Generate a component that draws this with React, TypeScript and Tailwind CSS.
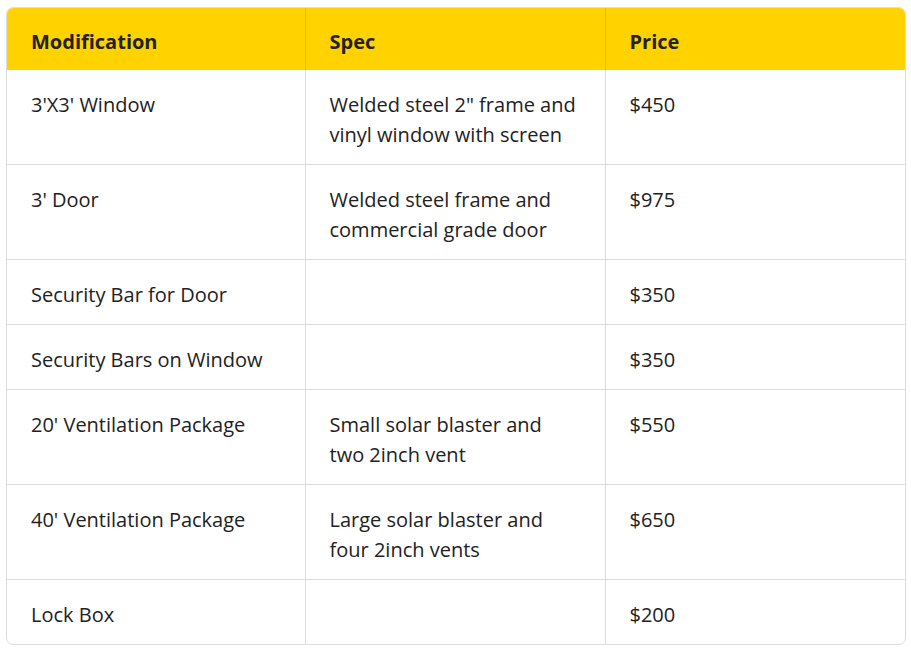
const rows = [
  { mod: "3'X3' Window", spec: "Welded steel 2\" frame and vinyl window with screen", price: "$450" },
  { mod: "3' Door", spec: "Welded steel frame and commercial grade door", price: "$975" },
  { mod: "Security Bar for Door", spec: "", price: "$350" },
  { mod: "Security Bars on Window", spec: "", price: "$350" },
  { mod: "20' Ventilation Package", spec: "Small solar blaster and two 2inch vent", price: "$550" },
  { mod: "40' Ventilation Package", spec: "Large solar blaster and four 2inch vents", price: "$650" },
  { mod: "Lock Box", spec: "", price: "$200" },
];

export default function App() {
  return (
    <div className="bg-white min-h-screen pt-[7px] pl-[6px] font-['Open_Sans',sans-serif] text-[#222]">
      <div className="w-[900px] rounded-[7px] border border-[#dddddd] overflow-hidden">
        <table className="w-full table-fixed border-collapse text-[20px] leading-[30px]">
          <thead>
            <tr className="bg-[#ffd200]">
              <th className="w-[298px] text-left font-bold pl-6 pt-[19px] pb-[13px] border-r border-[#e6bd00]">Modification</th>
              <th className="w-[300px] text-left font-bold pl-6 pt-[19px] pb-[13px] border-r border-[#e6bd00]">Spec</th>
              <th className="text-left font-bold pl-6 pt-[19px] pb-[13px]">Price</th>
            </tr>
          </thead>
          <tbody>
            {rows.map((r, i) => (
              <tr key={i} className={i > 0 ? "border-t border-[#dddddd]" : ""}>
                <td className="align-top pl-6 pr-6 pt-[20px] pb-[14px] border-r border-[#dddddd]">{r.mod}</td>
                <td className="align-top pl-6 pr-6 pt-[20px] pb-[14px] border-r border-[#dddddd]">{r.spec}</td>
                <td className="align-top pl-6 pr-6 pt-[20px] pb-[14px]">{r.price}</td>
              </tr>
            ))}
          </tbody>
        </table>
      </div>
    </div>
  );
}
